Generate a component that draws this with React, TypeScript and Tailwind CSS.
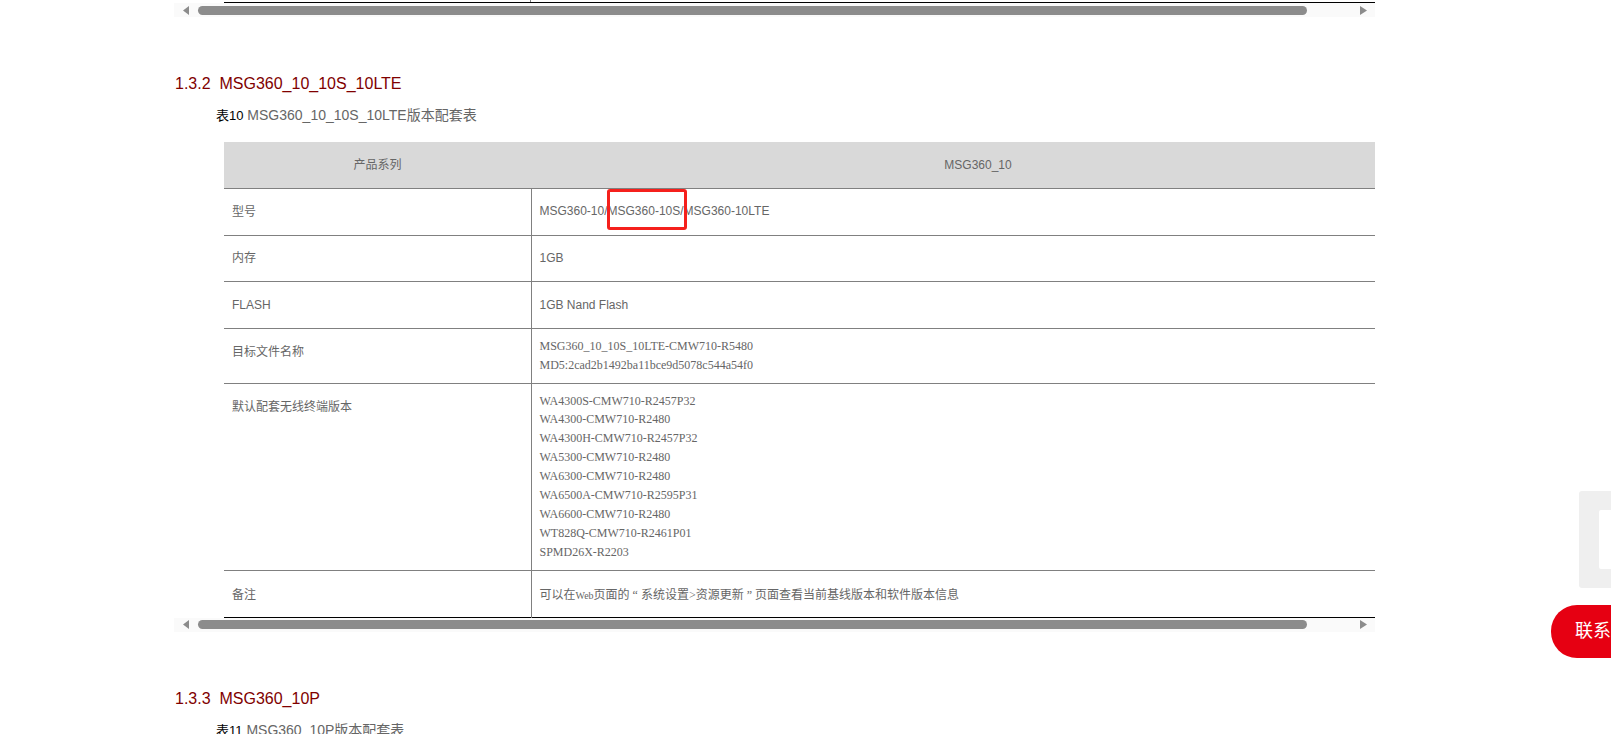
import React from 'react';

const serif = "font-['Liberation_Serif','Noto_Sans_CJK_SC',serif]";

const fwLines = [
  'WA4300S-CMW710-R2457P32',
  'WA4300-CMW710-R2480',
  'WA4300H-CMW710-R2457P32',
  'WA5300-CMW710-R2480',
  'WA6300-CMW710-R2480',
  'WA6500A-CMW710-R2595P31',
  'WA6600-CMW710-R2480',
  'WT828Q-CMW710-R2461P01',
  'SPMD26X-R2203',
];

const ScrollBar = () => (
  <div className="flex h-[14px] items-center bg-[#fafafa] pl-[9px] pr-[8px]">
    <svg width="6" height="9" viewBox="0 0 6 9" className="shrink-0">
      <path d="M6 0v9L0 4.5z" fill="#8c8c8c" />
    </svg>
    <div className="ml-[9px] h-[9px] w-[1109px] shrink-0 rounded-full bg-[#8c8c8c]" />
    <svg width="7" height="9" viewBox="0 0 7 9" className="ml-auto shrink-0">
      <path d="M0 0v9l7-4.5z" fill="#8c8c8c" />
    </svg>
  </div>
);

type RowProps = {
  label: string;
  children: React.ReactNode;
  h: string;
  labelPt?: string;
  valuePt?: string;
  last?: boolean;
};

const Row = ({ label, children, h, labelPt = 'pt-[14px]', valuePt = 'pt-[14px]', last }: RowProps) => (
  <tr className={`${h} ${last ? 'border-b border-black' : 'border-b border-[#808080]'}`}>
    <td className={`border-r border-[#808080] px-2 align-top text-[#666] ${labelPt}`}>{label}</td>
    <td className={`px-2 align-top text-[#666] ${valuePt}`}>{children}</td>
  </tr>
);

export default function App() {
  return (
    <div className="relative h-[734px] overflow-hidden bg-white font-['Liberation_Sans','Noto_Sans_CJK_SC',sans-serif]">
      <div className="ml-[174px] w-[1201px]">
        {/* end of the previous table */}
        <div className="ml-[50px] flex h-[3px] border-b border-black">
          <div className="w-[307px] border-r border-[#808080]" />
        </div>
        <ScrollBar />

        <h3 className="ml-[1px] mt-[56px] text-[16px] leading-[22px] text-[#800000]">
          1.3.2&nbsp;&nbsp;MSG360_10_10S_10LTE
        </h3>
        <p className="ml-[42px] mt-[10px] text-[14px] leading-[20px] text-[#666]">
          <span className="text-[13px] text-black">表10</span> MSG360_10_10S_10LTE版本配套表
        </p>

        <div className="relative mt-[16px] overflow-hidden pl-[50px] text-[12px] leading-[19px]">
          <table className="w-[1201px] table-fixed border-collapse">
            <colgroup>
              <col className="w-[307px]" />
              <col />
            </colgroup>
            <tbody>
              <tr className="h-[46px] border-b border-[#808080] bg-[#d9d9d9]">
                <td className="pt-[2px] text-center text-[#666]">产品系列</td>
                <td className="pt-[2px] text-center text-[#666]">MSG360_10</td>
              </tr>
              <Row label="型号" h="h-[47px]" valuePt="pt-[13px]">MSG360-10/MSG360-10S/MSG360-10LTE</Row>
              <Row label="内存" h="h-[46px]" labelPt="pt-[13px]" valuePt="pt-[13px]">1GB</Row>
              <Row label="FLASH" h="h-[47px]">1GB Nand Flash</Row>
              <Row label="目标文件名称" h="h-[55px]" valuePt="pt-[8px]">
                <div className={serif}>
                  <div>MSG360_10_10S_10LTE-CMW710-R5480</div>
                  <div>MD5:2cad2b1492ba11bce9d5078c544a54f0</div>
                </div>
              </Row>
              <Row label="默认配套无线终端版本" h="h-[187px]" valuePt="pt-[8px]">
                <div className={serif}>
                  {fwLines.map((line) => (
                    <div key={line} className="leading-[18.9px]">{line}</div>
                  ))}
                </div>
              </Row>
              <Row label="备注" h="h-[47px]" labelPt="pt-[15px]" valuePt="pt-[15px]" last>
                <span className={serif}>
                  可以在<span className="text-[10px]">Web</span>页面的 “ 系统设置&gt;资源更新 ” 页面查看当前基线版本和软件版本信息
                </span>
              </Row>
            </tbody>
          </table>
          {/* red annotation box */}
          <div className="absolute left-[433px] top-[47px] h-[41px] w-[80px] rounded-[3px] border-[3px] border-[#f5201c]" />
        </div>
        <ScrollBar />

        <h3 className="ml-[1px] mt-[56px] text-[16px] leading-[22px] text-[#800000]">
          1.3.3&nbsp;&nbsp;MSG360_10P
        </h3>
        <p className="ml-[42px] mt-[10px] text-[14px] leading-[20px] text-[#666]">
          <span className="text-[13px] text-black">表11</span> MSG360_10P版本配套表
        </p>
      </div>

      {/* floating side widgets, cut by the window edge */}
      <div className="absolute left-[1579px] top-[491px] h-[97px] w-[60px] rounded-[3px] bg-[#efefef] pl-[20px] pt-[19px]">
        <div className="h-[59px] w-[40px] rounded-[2px] bg-white" />
      </div>
      <div className={`absolute left-[1551px] top-[605px] flex h-[53px] w-[140px] items-center whitespace-nowrap rounded-[26px] bg-[#e60012] pl-[24px] text-[18px] text-white ${serif}`}>
        联系我们
      </div>
    </div>
  );
}
